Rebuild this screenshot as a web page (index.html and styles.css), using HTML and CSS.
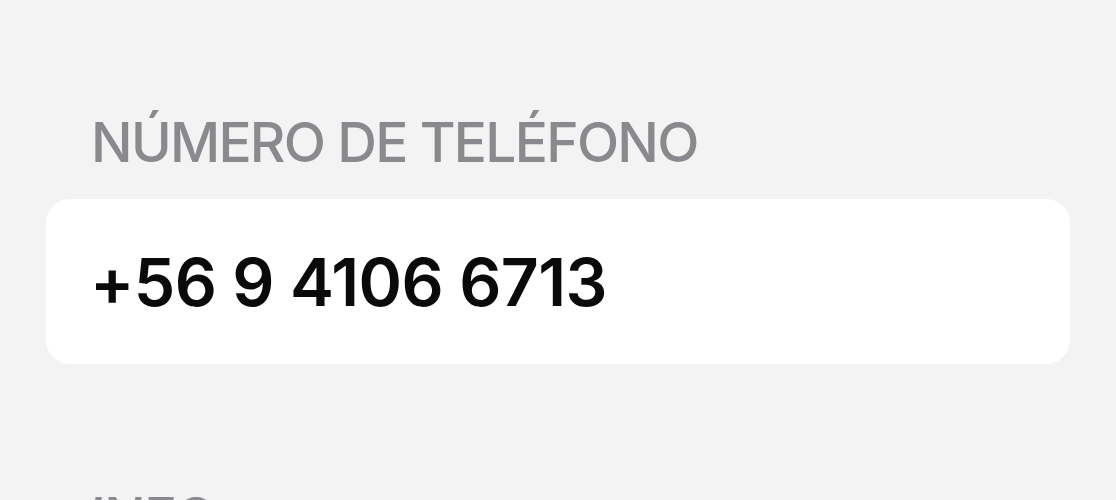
FILE: index.html
```html
<!DOCTYPE html>
<html lang="es">
<head>
<meta charset="utf-8">
<title>Número de teléfono</title>
<link rel="stylesheet" href="styles.css">
</head>
<body>
<main class="page">
  <section class="group">
    <h2 class="group-title">NÚMERO DE TELÉFONO</h2>
    <div class="card">
      <span class="phone">+56 9 4106 6713</span>
    </div>
  </section>
  <section class="group">
    <h2 class="group-title">INFO</h2>
  </section>
</main>
</body>
</html>
```
FILE: styles.css
```css
html, body {
  margin: 0;
  padding: 0;
  background: #f3f3f3;
  font-family: Inter, "Noto Sans", "Liberation Sans", sans-serif;
  overflow: hidden;
}

.page {
  padding: 109px 46px 0 46px;
  display: flex;
  flex-direction: column;
  gap: 120px;
}

.group {
  display: flex;
  flex-direction: column;
}

.group-title {
  margin: 0 0 24px 45px;
  font-size: 55px;
  line-height: 66px;
  font-weight: 500;
  color: #8a8a8e;
  letter-spacing: -1.7px;
}

.card {
  height: 165px;
  background: #ffffff;
  border-radius: 24px;
  display: flex;
  align-items: center;
  padding-left: 44px;
}

.phone {
  font-size: 66px;
  line-height: 80px;
  font-weight: 600;
  color: #0a0a0a;
  letter-spacing: -0.6px;
}
```
